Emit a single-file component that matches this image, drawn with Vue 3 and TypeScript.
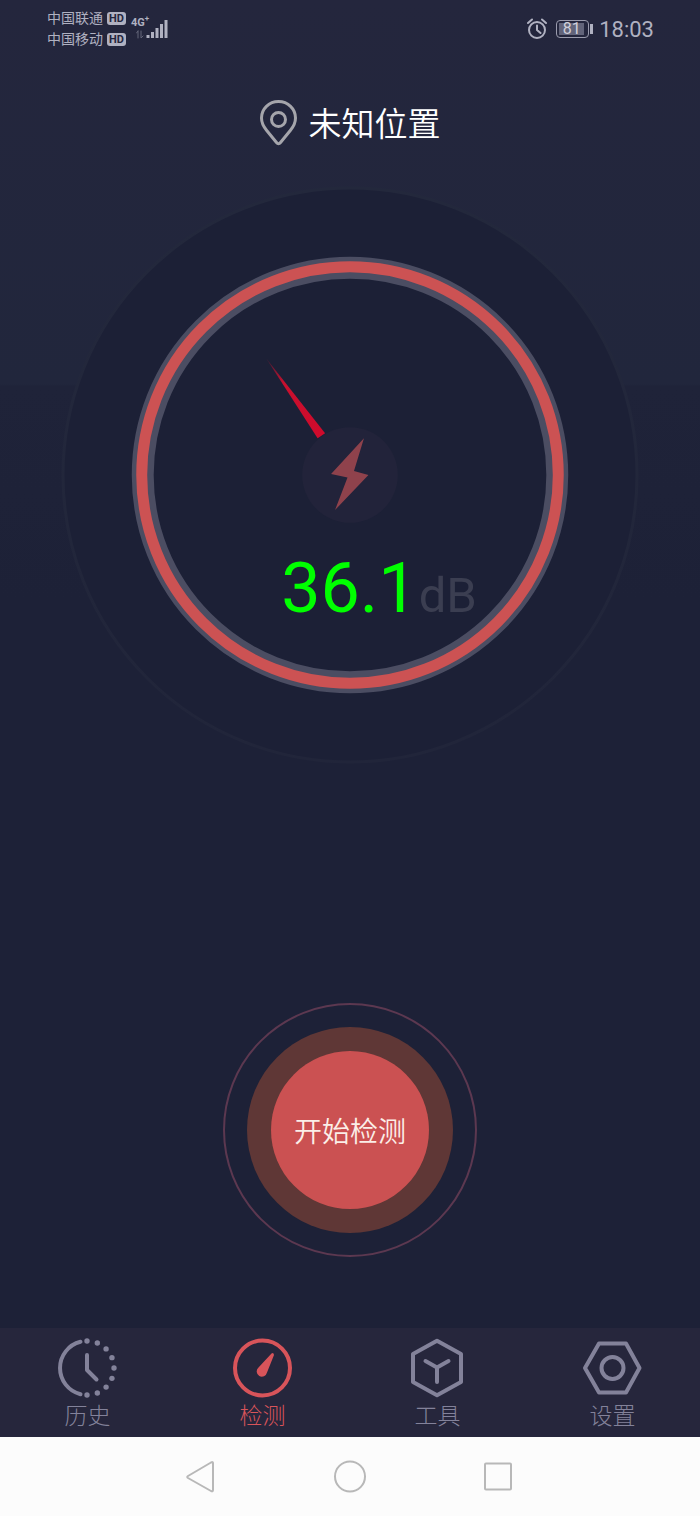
<script setup lang="ts">
import { ref } from 'vue'

type TabId = 'history' | 'detect' | 'tools' | 'settings'

const tabs: { id: TabId; label: string }[] = [
  { id: 'history', label: '历史' },
  { id: 'detect', label: '检测' },
  { id: 'tools', label: '工具' },
  { id: 'settings', label: '设置' },
]
const activeTab = ref<TabId>('detect')
const carriers = ['中国联通', '中国移动']
const level = ref(36.1)

// Dots on the right half of the history clock
const dots = Array.from({ length: 9 }, (_, i) => {
  const angle = ((i * 22.5 - 90) * Math.PI) / 180
  return { x: 31 + 27 * Math.cos(angle), y: 32 + 27 * Math.sin(angle) }
})
</script>

<template>
  <div class="screen">
    <header class="status">
      <div class="carriers">
        <div v-for="name in carriers" :key="name" class="carrier">
          <span>{{ name }}</span><span class="hd">HD</span>
        </div>
      </div>
      <div class="signal">
        <span class="net">4G<sup>+</sup></span>
        <svg class="bars" viewBox="0 0 32 20" aria-hidden="true">
          <path class="faint" d="M2 19V12M0.500 14L2 12M5 12V19L7 17" />
          <path class="bar" d="M12 16V19M16.500 13V19M21 9V19M25.500 5V19M30 1V19" />
        </svg>
      </div>
      <div class="status-right">
        <svg class="alarm" viewBox="0 0 20 22" aria-hidden="true">
          <circle cx="10" cy="12" r="8" />
          <path d="M10 7.500V12L13.500 15M1 5L5 1.500M19 5L15 1.500" />
        </svg>
        <span class="battery"><span class="cell"><span class="charge">81</span></span><span class="cap"></span></span>
        <time class="clock">18:03</time>
      </div>
    </header>

    <main class="main">
      <button type="button" class="location">
        <svg viewBox="0 0 38 48" aria-hidden="true">
          <path d="M18.500 2.500C9 2.500 1.500 9.800 1.500 19C1.500 24 3.700 27.800 6.500 31.200L16.500 43.500C17.700 45 19.300 45 20.500 43.500L30.500 31.200C33.300 27.800 35.500 24 35.500 19C35.500 9.800 28 2.500 18.500 2.500Z" />
          <circle cx="18.500" cy="20.500" r="7" />
        </svg>
        <span>未知位置</span>
      </button>

      <section class="dial">
        <svg class="gauge" viewBox="0 0 576 576" aria-hidden="true">
          <defs>
            <linearGradient id="needle" x1="0" y1="0" x2="1" y2="1">
              <stop offset="0" stop-color="#c8102e" stop-opacity="0.2" />
              <stop offset="0.300" stop-color="#c8102e" />
              <stop offset="1" stop-color="#d00a2c" />
            </linearGradient>
            <linearGradient id="rim" x1="0" y1="0" x2="0" y2="1">
              <stop offset="0" stop-color="#23283c" />
              <stop offset="1" stop-color="#21253a" />
            </linearGradient>
          </defs>
          <circle cx="288" cy="288" r="288" fill="#1c2036" stroke="url(#rim)" stroke-width="3" />
          <circle cx="288" cy="288" r="208" fill="#1c2036" stroke="#4b4d62" stroke-width="22" />
          <circle cx="288" cy="288" r="209" fill="none" stroke="#cc5253" stroke-width="11" />
          <circle cx="288" cy="288" r="48" fill="#22233a" />
          <path d="M204 171L263 246L255.500 251Z" fill="url(#needle)" />
          <path d="M302 251L269 287L285.500 290.500L273 323L306.500 288L292 284Z" fill="#8f424c" />
        </svg>
        <p class="reading"><span class="value">{{ level.toFixed(1) }}</span><span class="unit">dB</span></p>
      </section>

      <div class="ring">
        <div class="halo">
          <button type="button" class="start">开始检测</button>
        </div>
      </div>
    </main>

    <nav class="tabs">
      <button
        v-for="tab in tabs"
        :key="tab.id"
        type="button"
        class="tab"
        :class="{ active: tab.id === activeTab }"
        @click="activeTab = tab.id"
      >
        <svg v-if="tab.id === 'history'" viewBox="0 0 64 64" aria-hidden="true">
          <path d="M24.500 5.800A27 27 0 0 0 24.500 58.200" />
          <path d="M31 19V34L40.500 43.500" />
          <circle v-for="(dot, i) in dots" :key="i" class="solid" :cx="dot.x" :cy="dot.y" r="2.700" />
        </svg>
        <svg v-else-if="tab.id === 'detect'" viewBox="0 0 64 64" aria-hidden="true">
          <circle cx="31.500" cy="32" r="27.500" />
          <path class="solid" d="M42.500 17.500Q41.800 16.300 40.500 17.500L27.500 31.500A5.200 5.200 0 1 0 36 36.500L43 19Z" />
        </svg>
        <svg v-else-if="tab.id === 'tools'" viewBox="0 0 64 64" aria-hidden="true">
          <path d="M31 4.800L55 18V46L31 59.200L7 46V18Z" />
          <path d="M19.500 25L31 31.500L42.500 25M31 31.500V46" />
        </svg>
        <svg v-else viewBox="0 0 64 64" aria-hidden="true">
          <path d="M18 7.500H45L58.500 32L45 56.500H18L4 32Z" />
          <circle cx="31.500" cy="32" r="11" />
        </svg>
        <span>{{ tab.label }}</span>
      </button>
    </nav>

    <footer class="system">
      <button type="button" aria-label="返回">
        <svg viewBox="0 0 36 36"><path d="M29 4V31Q29 33 27 32L4 19Q2.500 18 4 17L27 3.500Q29 2.500 29 4Z" /></svg>
      </button>
      <button type="button" aria-label="主页">
        <svg viewBox="0 0 36 36"><circle cx="18" cy="17.500" r="15" /></svg>
      </button>
      <button type="button" aria-label="最近任务">
        <svg viewBox="0 0 36 36"><rect x="5" y="4.500" width="26" height="26" rx="1" /></svg>
      </button>
    </footer>
  </div>
</template>

<style>
body {
  margin: 0;
  background: #1d2136;
}
</style>

<style scoped>
.screen {
  min-height: 100vh;
  display: flex;
  flex-direction: column;
  background: linear-gradient(#24263d 0, #21263c 384px, #1f2339 386px, #1d2137 600px, #1d2137 100%);
  font-family: Roboto, "Noto Sans CJK SC", sans-serif;
  font-weight: 300;
}
button {
  border: 0;
  padding: 0;
  background: none;
  color: inherit;
  font: inherit;
  cursor: pointer;
}
svg {
  fill: none;
  stroke: currentColor;
  stroke-linecap: round;
  stroke-linejoin: round;
}

.status {
  display: flex;
  align-items: flex-start;
  padding: 8px 46px 0 47px;
  height: 52px;
  color: #b0b1c1;
}
.carrier {
  display: flex;
  align-items: center;
  gap: 4px;
  height: 21px;
  font-size: 14px;
  line-height: 21px;
  font-weight: 400;
}
.hd {
  width: 19px;
  height: 13px;
  border-radius: 3px;
  background: #b0b1c1;
  color: #24263d;
  font-size: 11px;
  line-height: 13px;
  font-weight: 700;
  text-align: center;
}
.signal {
  display: flex;
  flex-direction: column;
  margin-left: 5px;
  padding-top: 8px;
  width: 37px;
}
.net {
  height: 3px;
  font-size: 11px;
  line-height: 14px;
  font-weight: 700;
}
.net sup {
  font-size: 8px;
  line-height: 0;
}
.bars {
  width: 32px;
  height: 20px;
  align-self: flex-end;
}
.bar {
  stroke-width: 3;
  stroke-linecap: butt;
}
.faint {
  stroke: #64667a;
  stroke-width: 1;
}
.status-right {
  display: flex;
  align-items: center;
  margin-left: auto;
  height: 42px;
}
.alarm {
  width: 20px;
  height: 22px;
  stroke-width: 2;
}
.battery {
  display: flex;
  align-items: center;
  gap: 1px;
  margin: 0 6px 0 9px;
}
.cell {
  border: 1px solid #9a9bad;
  border-radius: 4px;
  padding: 2px 4px 2px 2px;
}
.charge {
  display: block;
  width: 25px;
  height: 12px;
  background: #62647a;
  color: #d0d0da;
  font-size: 16px;
  line-height: 12px;
  font-weight: 400;
  text-align: center;
}
.cap {
  width: 3px;
  height: 10px;
  background: #b0b1c1;
}
.clock {
  font-size: 22px;
  font-weight: 400;
}

.main {
  flex: 1;
  display: flex;
  flex-direction: column;
  align-items: center;
}
.location {
  display: flex;
  align-items: center;
  gap: 11px;
  margin-top: 39px;
  height: 48px;
  color: #fff;
  font-size: 33px;
  line-height: 48px;
  font-weight: 350;
}
.location span {
  padding-top: 4px;
}
.location svg {
  width: 38px;
  height: 48px;
  color: #a5a5ab;
  stroke-width: 3;
}
.dial {
  display: grid;
  width: 82%;
  margin-top: 41px;
}
.dial > * {
  grid-area: 1 / 1;
}
.gauge {
  width: 100%;
  stroke: none;
  overflow: visible;
}
.reading {
  align-self: center;
  justify-self: center;
  margin: 0;
  padding: 244px 0 0 58px;
  line-height: 84px;
  font-weight: 400;
  white-space: nowrap;
}
.value {
  color: #0f0;
  font-size: 70px;
}
.unit {
  margin-left: 1px;
  color: #3b3e51;
  font-size: 49px;
}

.ring {
  margin: auto 0 71px;
  padding: 22px;
  border: 2px solid #5c3850;
  border-radius: 50%;
}
.halo {
  padding: 24px;
  border-radius: 50%;
  background: #5f3736;
}
.start {
  display: block;
  width: 158px;
  height: 158px;
  border-radius: 50%;
  background: #cb5152;
  color: #fbeee8;
  font-size: 28px;
  font-weight: 350;
}

.tabs {
  display: grid;
  grid-template-columns: repeat(4, 1fr);
  height: 109px;
  background: #26263c;
  color: #83829a;
}
.tab {
  display: flex;
  flex-direction: column;
  align-items: center;
  gap: 2px;
  padding-top: 8px;
  font-size: 23px;
  line-height: 30px;
}
.tab svg {
  width: 64px;
  height: 64px;
  stroke-width: 4;
}
.tab svg .solid {
  fill: currentColor;
  stroke: none;
}
.active {
  color: #d8545a;
}

.system {
  display: flex;
  justify-content: center;
  align-items: center;
  gap: 112px;
  height: 79px;
  background: #fcfcfc;
  color: #b8b8b8;
}
.system svg {
  display: block;
  width: 36px;
  height: 36px;
  stroke-width: 2;
}
</style>
